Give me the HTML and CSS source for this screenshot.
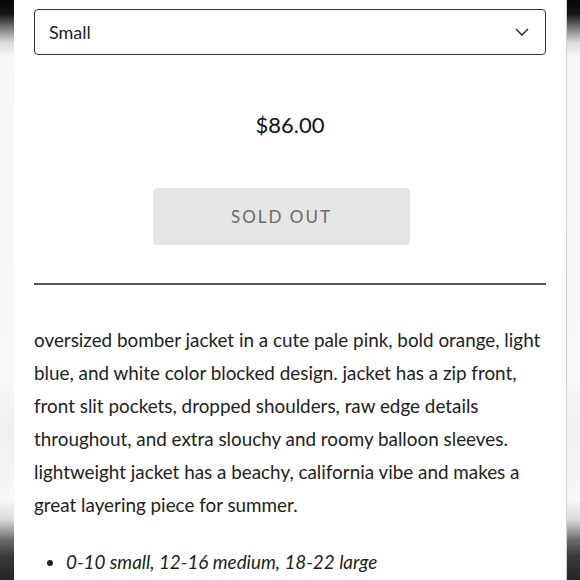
FILE: index.html
```html
<!DOCTYPE html>
<html>
  <head>
    <meta charset="UTF-8">
    <title>Bomber jacket</title>
    <link rel="stylesheet" href="styles.css">
  </head>
  <body>
    <div class="page">
      <div class="edge edge-left"></div>
      <main class="product">
        <div class="select">
          <span>Small</span>
          <svg class="chevron" width="14" height="8" viewBox="0 0 14 8">
            <path d="M1 1 L7 7 L13 1" fill="none" stroke="#222" stroke-width="1.4"></path>
          </svg>
        </div>
        <p class="price">$86.00</p>
        <div class="buy">
          <button class="sold-out" type="button" disabled>SOLD OUT</button>
        </div>
        <hr class="divider">
        <p class="desc">oversized bomber jacket in a cute pale pink, bold orange, light blue, and white color blocked design. jacket has a zip front, front slit pockets, dropped shoulders, raw edge details throughout, and extra slouchy and roomy balloon sleeves. lightweight jacket has a beachy, california vibe and makes a great layering piece for summer.</p>
        <ul class="sizes">
          <li><em>0-10 small, 12-16 medium, 18-22 large</em></li>
        </ul>
      </main>
      <div class="edge edge-right"></div>
    </div>
  </body>
</html>
```
FILE: styles.css
```css
body {
  margin: 0;
  font-family: Lato, "Open Sans", sans-serif;
  background-color: #fff;
  color: #222;
}
.page {
  display: flex;
  height: 580px;
  overflow: hidden;
}
.edge {
  width: 14px;
  flex: none;
  background: linear-gradient(to bottom, #080808 0, #151515 14px, #7a7a7a 28px, #d8d8d8 42px, #f6f6f6 56px, #f9f9f9 380px, #efefef 430px, #f8f8f8 500px, #d8d8d8 520px, #6c6c6c 540px, #3a3a3a 556px, #242428 580px);
}
.edge-right {
  width: 13px;
  border-left: 1px solid #d0d0d0;
}
.product {
  flex: 1;
  padding: 9px 20px 0 20px;
}
.select {
  height: 44px;
  border: 1px solid #333;
  border-radius: 4px;
  display: flex;
  align-items: center;
  justify-content: space-between;
  padding: 0 16px 0 14px;
  font-size: 18px;
  color: #222;
}
.chevron {
  display: block;
}
.price {
  margin: 57px 0 0 0;
  text-align: center;
  font-size: 22px;
  color: #111;
  line-height: 26px;
}
.buy {
  display: flex;
  justify-content: center;
  margin-top: 50px;
}
.sold-out {
  width: 257px;
  height: 57px;
  margin-left: -17px;
  border: 0;
  border-radius: 4px;
  background-color: #e5e5e5;
  color: #6b6b6b;
  font-family: Lato, sans-serif;
  font-size: 17px;
  letter-spacing: 2px;
}
.divider {
  margin: 38px 0 0 0;
  border: 0;
  border-top: 2px solid #555;
}
.desc {
  margin: 38px 0 0 0;
  font-size: 18.85px;
  line-height: 33px;
  color: #222;
}
.sizes {
  margin: 24px 0 0 0;
  padding-left: 32px;
  font-size: 18.85px;
  line-height: 33px;
}
```
